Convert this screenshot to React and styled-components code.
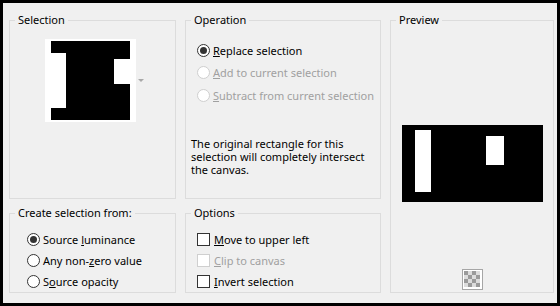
import React from "react"
import styled, { createGlobalStyle } from "styled-components"

const Global = createGlobalStyle`
  html, body {
    margin: 0;
    padding: 0;
    background: #f0f0f0;
  }
  body {
    font-family: "Noto Sans", "Open Sans", sans-serif;
    font-size: 11px;
    color: #000;
  }
`

const Dialog = styled.div`
  box-sizing: border-box;
  width: 560px;
  height: 306px;
  border: 3px solid #000;
  background: #f0f0f0;
  padding: 9px 0 0 6px;
  display: grid;
  grid-template-columns: 167px 196px 164px;
  grid-template-rows: 187px 88px;
  column-gap: 9px;
  row-gap: 6px;
`

const Group = styled.fieldset`
  margin: 0;
  padding: 0;
  min-width: 0;
  border: 1px solid #dcdcdc;
  grid-column: ${props => props.$col};
  grid-row: ${props => props.$row};
  display: flex;
  flex-direction: column;
`

const Legend = styled.legend`
  margin-left: 5px;
  padding: 0 3px;
  line-height: 16px;
  font-size: 11px;
`

const ThumbRow = styled.div`
  display: flex;
  align-items: center;
  justify-content: center;
  padding: 11px 0 0 3px;
  gap: 2px;
`

const Arrow = styled.span`
  width: 0;
  height: 0;
  border-left: 3px solid transparent;
  border-right: 3px solid transparent;
  border-top: 3px solid #a8a8a8;
`

const Options = styled.div`
  display: flex;
  flex-direction: column;
  padding: ${props => props.$pad};
`

const Row = styled.label`
  display: flex;
  align-items: center;
  gap: ${props => props.$gap || 3}px;
  height: ${props => props.$h}px;
  color: ${props => props.$off ? "#a0a0a0" : "#000"};
  white-space: nowrap;
`

const Radio = styled.span`
  box-sizing: border-box;
  flex: none;
  width: 13px;
  height: 13px;
  border-radius: 50%;
  border: 1px solid ${props => props.$off ? "#cfcfcf" : "#333"};
  background: #fff;
  display: flex;
  align-items: center;
  justify-content: center;
  &::after {
    content: '';
    width: 7px;
    height: 7px;
    border-radius: 50%;
    background: #333;
    display: ${props => props.$on ? "block" : "none"};
  }
`

const Check = styled.span`
  box-sizing: border-box;
  flex: none;
  width: 13px;
  height: 13px;
  border: 1px solid ${props => props.$off ? "#cfcfcf" : "#333"};
  background: #fff;
`

const Note = styled.p`
  margin: 30px 0 0 5px;
  line-height: 13px;
  white-space: nowrap;
`

const PreviewBody = styled.div`
  display: flex;
  flex-direction: column;
  align-items: center;
  padding: 97px 0 0 1px;
  gap: 67px;
`

const SelectionThumb = () => (
  <svg width="91" height="83" viewBox="0 0 91 83">
    <rect width="91" height="83" fill="#fff" />
    <rect x="6" y="2" width="79" height="79" fill="#000" />
    <rect x="0" y="14" width="21" height="55" fill="#fff" />
    <rect x="69" y="20" width="22" height="25" fill="#fff" />
  </svg>
)

const PreviewImage = () => (
  <svg width="141" height="77" viewBox="0 0 141 77">
    <rect width="141" height="77" fill="#000" />
    <rect x="13" y="5" width="16" height="62" fill="#fff" />
    <rect x="84" y="11" width="18" height="29" fill="#fff" />
  </svg>
)

const CheckerIcon = () => {
  const cells = []
  for (let r = 0; r < 4; r++) {
    for (let c = 0; c < 4; c++) {
      if ((r + c) % 2 === 0) cells.push(<rect key={r + "-" + c} x={2 + c * 4} y={2 + r * 4} width="4" height="4" fill="#9a9a9a" />)
    }
  }
  return (
    <svg width="21" height="21" viewBox="0 0 21 21">
      <rect x="0.5" y="0.5" width="20" height="20" fill="#fff" stroke="#a6a6a6" />
      <rect x="2" y="2" width="16" height="16" fill="#dcdcdc" />
      {cells}
    </svg>
  )
}

const App = () => {
  return (
    <>
      <Global />
      <Dialog>
        <Group $col="1" $row="1">
          <Legend>Selection</Legend>
          <ThumbRow>
            <SelectionThumb />
            <Arrow />
          </ThumbRow>
        </Group>

        <Group $col="2" $row="1">
          <Legend>Operation</Legend>
          <Options $pad="11px 0 0 11px">
            <Row $h={22.5}><Radio $on /><span><u>R</u>eplace selection</span></Row>
            <Row $h={22.5} $off><Radio $off /><span><u>A</u>dd to current selection</span></Row>
            <Row $h={22.5} $off><Radio $off /><span><u>S</u>ubtract from current selection</span></Row>
          </Options>
          <Note>
            The original rectangle for this<br />
            selection will completely intersect<br />
            the canvas.
          </Note>
        </Group>

        <Group $col="3" $row="1 / span 2">
          <Legend>Preview</Legend>
          <PreviewBody>
            <PreviewImage />
            <CheckerIcon />
          </PreviewBody>
        </Group>

        <Group $col="1" $row="2">
          <Legend>Create selection from:</Legend>
          <Options $pad="8px 0 0 17px">
            <Row $h={21}><Radio $on /><span>Source <u>l</u>uminance</span></Row>
            <Row $h={21}><Radio /><span>Any non-<u>z</u>ero value</span></Row>
            <Row $h={21}><Radio /><span>S<u>o</u>urce opacity</span></Row>
          </Options>
        </Group>

        <Group $col="2" $row="2">
          <Legend>Options</Legend>
          <Options $pad="8px 0 0 11px">
            <Row $h={21} $gap={4}><Check /><span><u>M</u>ove to upper left</span></Row>
            <Row $h={21} $gap={4} $off><Check $off /><span><u>C</u>lip to canvas</span></Row>
            <Row $h={21} $gap={4}><Check /><span><u>I</u>nvert selection</span></Row>
          </Options>
        </Group>
      </Dialog>
    </>
  )
}

export default App
